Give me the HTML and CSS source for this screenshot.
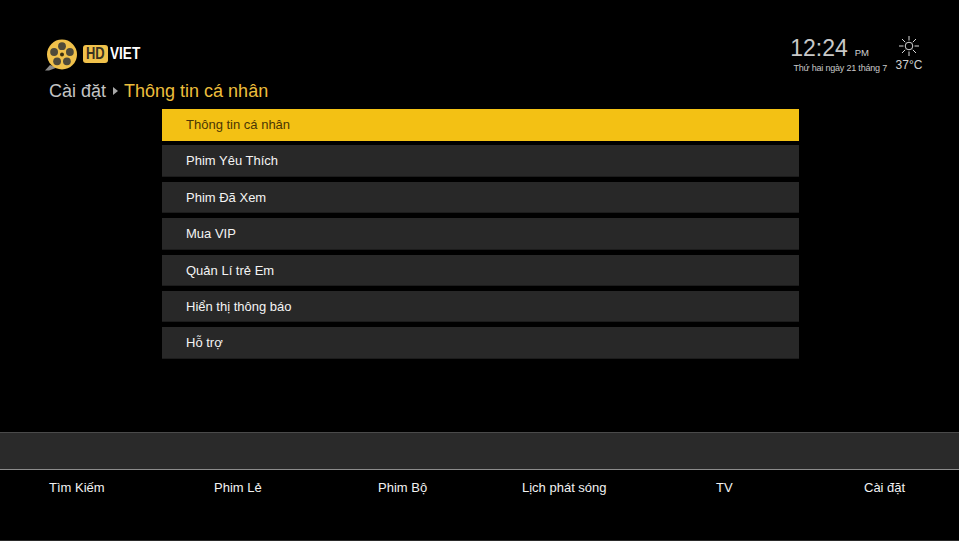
FILE: index.html
```html
<!DOCTYPE html>
<html lang="vi">
<head>
<meta charset="utf-8">
<title>HD Viet - Cài đặt</title>
<link rel="stylesheet" href="styles.css">
</head>
<body>
<div class="screen">
  <header class="top">
    <div class="brand">
      <svg class="reel" width="33" height="32" viewBox="0 0 33 32" aria-hidden="true">
        <path d="M0 31.5 L5 26 L12 28.5 L4 31.5 Z" fill="#8a8a8a"/>
        <circle cx="17" cy="15.5" r="15" fill="#f0c14b"/>
        <circle cx="17" cy="15.5" r="2" fill="#3a2f10"/>
        <circle cx="17" cy="7.2" r="3.9" fill="#4f4a3a"/>
        <circle cx="24.9" cy="13" r="3.9" fill="#4f4a3a"/>
        <circle cx="21.9" cy="22.3" r="3.9" fill="#4f4a3a"/>
        <circle cx="12.1" cy="22.3" r="3.9" fill="#4f4a3a"/>
        <circle cx="9.1" cy="13" r="3.9" fill="#4f4a3a"/>
      </svg>
      <span class="logo-text"><span class="hd"><span class="hd-label">HD</span></span><span class="viet">VIET</span></span>
    </div>
    <div class="status">
      <div class="time-block">
        <div class="clock"><span class="hours">12:24</span><span class="ampm">PM</span></div>
        <div class="date">Thứ hai ngày 21 tháng 7</div>
      </div>
      <div class="weather">
        <svg class="sun" width="22" height="22" viewBox="0 0 22 22" aria-hidden="true">
          <circle cx="11" cy="11" r="3.8" fill="none" stroke="#d8d8d8" stroke-width="1"/>
          <path d="M11 1V5.5M11 16.5V21M1 11H5.5M16.5 11H21M4 4L7.2 7.2M14.8 14.8L18 18M4 18L7.2 14.8M14.8 7.2L18 4" stroke="#d8d8d8" stroke-width="1" fill="none"/>
        </svg>
        <div class="temp">37°C</div>
      </div>
    </div>
  </header>

  <nav class="crumbs">
    <span class="crumb-root">Cài đặt</span>
    <span class="crumb-arrow"></span>
    <span class="crumb-current">Thông tin cá nhân</span>
  </nav>

  <ul class="menu">
    <li class="item active">Thông tin cá nhân</li>
    <li class="item">Phim Yêu Thích</li>
    <li class="item">Phim Đã Xem</li>
    <li class="item">Mua VIP</li>
    <li class="item">Quản Lí trẻ Em</li>
    <li class="item">Hiển thị thông báo</li>
    <li class="item">Hỗ trợ</li>
  </ul>

  <div class="band"></div>

  <footer class="tabs">
    <span class="tab">Tìm Kiếm</span>
    <span class="tab">Phim Lẻ</span>
    <span class="tab">Phim Bộ</span>
    <span class="tab">Lịch phát sóng</span>
    <span class="tab">TV</span>
    <span class="tab">Cài đặt</span>
  </footer>
</div>
</body>
</html>
```
FILE: styles.css
```css
* { box-sizing: border-box; }
html, body { margin: 0; padding: 0; background: #000; }
body { font-family: "Liberation Sans", Arial, sans-serif; color: #fff; }
.screen {
  width: 959px;
  height: 541px;
  overflow: hidden;
  display: flex;
  flex-direction: column;
  background: #000;
  border-bottom: 1px solid #2a2a2a;
}
.top {
  height: 76px;
  padding: 34px 36px 0 45px;
  display: flex;
  justify-content: space-between;
  align-items: flex-start;
}
.brand { display: flex; align-items: center; margin-top: 5px; }
.reel { display: block; }
.logo-text { display: flex; align-items: center; margin-left: 5px; margin-top: -3px; }
.hd {
  width: 25px;
  height: 18px;
  background: #f0c14b;
  border-radius: 3px;
  overflow: hidden;
  display: flex;
  justify-content: center;
}
.hd-label {
  display: block;
  color: #3a3220;
  font-weight: 700;
  font-size: 17px;
  line-height: 18px;
  transform: scaleX(0.76);
}
.viet {
  display: block;
  margin-left: 2px;
  width: 33px;
  font-weight: 700;
  font-size: 17px;
  line-height: 18px;
  color: #fff;
  transform: scaleX(0.8);
  transform-origin: left center;
}
.status { display: flex; align-items: flex-start; }
.time-block { display: flex; flex-direction: column; align-items: flex-end; }
.clock { display: flex; align-items: baseline; color: #c8c8c8; height: 29px; margin-right: 18px; }
.hours { font-size: 23px; line-height: 29px; }
.ampm { font-size: 9.5px; margin-left: 7px; font-weight: 400; color: #d0d0d0; }
.date { font-size: 9px; line-height: 11px; color: #c8c8c8; white-space: nowrap; letter-spacing: -0.2px; }
.weather { width: 28px; margin-left: 8px; display: flex; flex-direction: column; align-items: center; }
.sun { display: block; margin-top: 1px; }
.temp { font-size: 12px; line-height: 14px; color: #d0d0d0; white-space: nowrap; margin-top: 1px; }
.crumbs {
  height: 33px;
  padding-left: 49px;
  display: flex;
  align-items: flex-start;
  font-size: 18px;
  line-height: 30px;
}
.crumb-root { color: #c4c4c4; }
.crumb-arrow {
  width: 0;
  height: 0;
  margin: 11px 6px 0 7px;
  border-left: 5px solid #a8a8a8;
  border-top: 4px solid transparent;
  border-bottom: 4px solid transparent;
}
.crumb-current { color: #ecbe3c; }
.menu {
  list-style: none;
  margin: 0 0 0 161.5px;
  padding: 0;
  width: 637px;
  display: flex;
  flex-direction: column;
  gap: 4.9px;
}
.item {
  height: 31.5px;
  line-height: 31px;
  padding-left: 24.5px;
  background: #282828;
  font-size: 13px;
  color: #f4f4f4;
  border-bottom: 1px solid #1c1c1c;
}
.item.active { background: #f3c114; color: #4a3604; border-bottom: 0; }
.band {
  margin-top: 73px;
  height: 38px;
  background: #2a2a2a;
  border-top: 1px solid #4a4a4a;
  border-bottom: 1px solid #8c8c8c;
}
.tabs {
  display: grid;
  grid-template-columns: 165px 164px 144px 194px 148px 1fr;
  padding: 10px 0 0 49px;
  font-size: 13px;
  line-height: 15px;
  color: #f2f2f2;
}
.tab { white-space: nowrap; }
```
